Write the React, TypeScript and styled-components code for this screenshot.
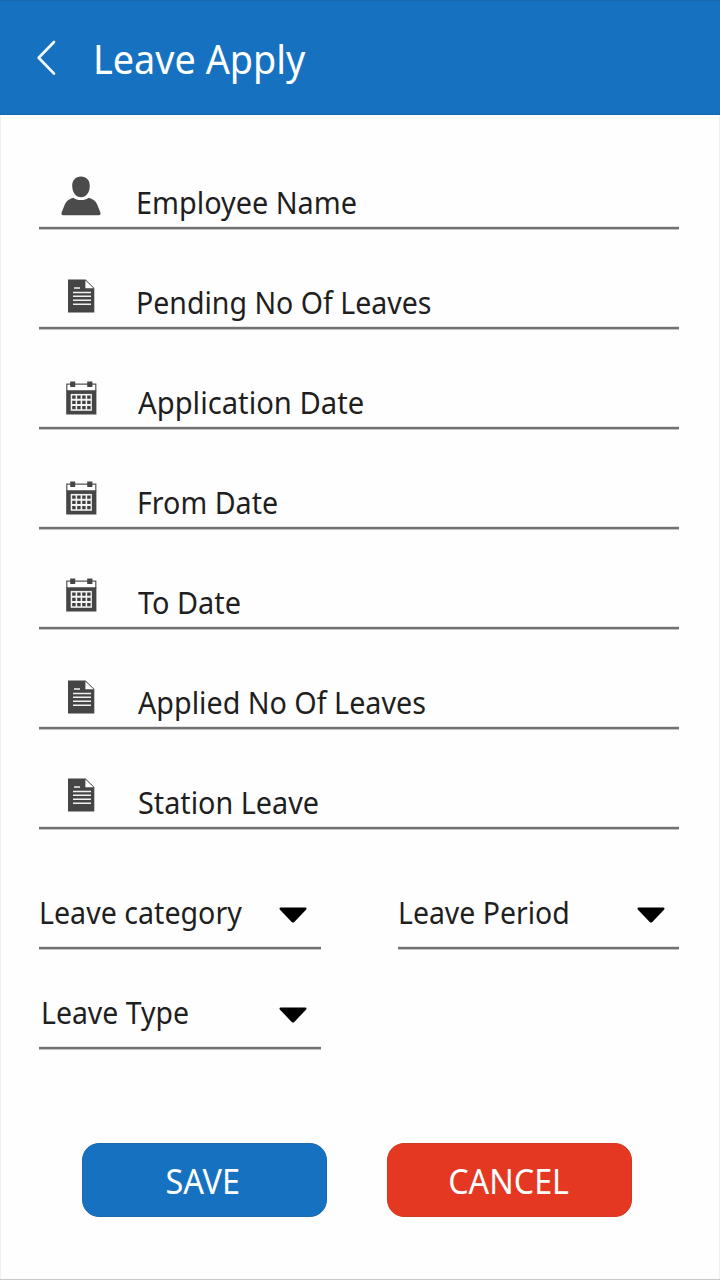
import React from 'react';
import styled, { createGlobalStyle, css } from 'styled-components';

const GlobalStyle = createGlobalStyle`
  *, *::before, *::after { box-sizing: border-box; }
  body {
    margin: 0;
    background: #fefefe;
    font-family: 'Noto Sans', 'Open Sans', sans-serif;
  }
`;

const underline = css`
  border-bottom: 2px solid #717171;
  box-shadow: 0 1px 0 #c4c4c4, inset 0 -1px 0 #e2e2e2;
`;

const Screen = styled.div`
  display: flex;
  flex-direction: column;
  width: 720px;
  height: 1280px;
  background: #fefefe;
  border-bottom: 1px solid #c9c9c9;
  box-shadow: inset 1px 0 0 #f0f0f0, inset -1px 0 0 #f0f0f0;
  overflow: hidden;
`;

const Header = styled.header`
  display: flex;
  align-items: flex-start;
  flex: none;
  height: 114.5px;
  padding-left: 36px;
  background: #1672c1;
  box-shadow: inset 0 1px 0 #1a68ab, inset 0 -1px 0 #1766ad;
`;

const BackButton = styled.button`
  display: flex;
  flex: none;
  width: 57px;
  margin-top: 39px;
  padding: 0;
  border: 0;
  background: none;
`;

const Title = styled.h1<{ $stretch: number }>`
  margin: 32px 0 0;
  font-size: 40px;
  font-weight: 400;
  line-height: 54px;
  color: #fff;
  white-space: nowrap;
  transform: scaleX(${(p) => p.$stretch});
  transform-origin: left;
`;

const Form = styled.form`
  display: flex;
  flex-direction: column;
  flex: 1;
  padding: 14.5px 41px 0 39px;
`;

const Field = styled.label`
  display: flex;
  align-items: flex-start;
  height: 100px;
  ${underline}
`;

const IconSlot = styled.span<{ $top: number }>`
  display: flex;
  justify-content: center;
  flex: none;
  width: 84px;
  padding-top: ${(p) => p.$top}px;
`;

const Label = styled.span<{ $stretch: number; $left?: number; $top?: number }>`
  display: block;
  flex: none;
  margin-top: ${(p) => p.$top ?? 53}px;
  margin-left: ${(p) => p.$left ?? 0}px;
  font-size: 30.6px;
  font-weight: 365;
  line-height: 40px;
  color: #1f1f1f;
  white-space: nowrap;
  transform: scaleX(${(p) => p.$stretch});
  transform-origin: left;
`;

const Selects = styled.div`
  display: grid;
  grid-template-columns: 282px 281px;
  grid-auto-rows: 100px;
  justify-content: space-between;
  margin-top: 20px;
`;

const Select = styled.div`
  display: flex;
  align-items: flex-start;
  justify-content: space-between;
  padding-right: 14px;
  ${underline}
`;

const Caret = styled.svg`
  display: block;
  flex: none;
  margin-top: 58.4px;
`;

const Actions = styled.div`
  display: flex;
  gap: 60px;
  margin: 94.3px 0 0 42.6px;
`;

const Action = styled.button<{ $color: string; $edge: string }>`
  display: flex;
  align-items: center;
  justify-content: center;
  width: 245px;
  height: 74px;
  padding: 2px 2px 0 0;
  border: 1px solid ${(p) => p.$edge};
  border-radius: 17px;
  background: ${(p) => p.$color};
  color: #fff;
  font-family: inherit;
  font-size: 34.5px;
  font-weight: 385;
  line-height: 46px;
`;

const ActionText = styled.span<{ $stretch: number }>`
  display: block;
  transform: scaleX(${(p) => p.$stretch});
`;

const PersonIcon = () => (
  <svg width="40" height="40" viewBox="0 0 40 40" fill="#4b4b4b">
    <path d="M20 0.5C25.5 .5 29 4.3 28.8 10.2C28.6 16.6 25 21.2 20 21.2C15 21.2 11.4 16.6 11.2 10.2C11 4.3 14.5 .5 20 .5Z" />
    <path d="M12.3 21.8C14 23.3 17 24.1 20 24.1C23 24.1 26 23.3 27.7 21.8C31.5 23 34.3 24.4 36 28L39.4 36.6C39.9 38 39.2 39.3 37.8 39.3H2.2C.8 39.3 .1 38 .6 36.6L4 28C5.7 24.4 8.5 23 12.3 21.8Z" />
  </svg>
);

const DocumentIcon = () => (
  <svg width="27" height="34" viewBox="0 0 27 34">
    <path d="M0 .4H17.6L26.3 9V33.4H0Z" fill="#454545" />
    <path d="M17.4 1.5V9.3H25.6Z" fill="#fff" />
    <path d="M6 9H12M5 13.4H23M5 17.3H23M5 21.3H23M5 25.3H23" fill="none" stroke="#f1f1f1" strokeWidth="1.5" />
  </svg>
);

const CalendarIcon = () => (
  <svg width="31" height="34" viewBox="0 0 31 34">
    <path d="M.8 10V3.2H29.8V10" fill="none" stroke="#555" strokeWidth="1.2" />
    <path d="M4.2.6H9.2V6H4.2ZM21.2.6H26.4V6H21.2ZM.2 9.3H30.4V33.4H.2Z" fill="#454545" />
    <path d="M4.7 12.9H25.9V29.8H4.7Z" fill="#f3f3f3" />
    <path
      d="M6.2 14.6H9.6V17.8H6.2ZM11.2 14.6H14.6V17.8H11.2ZM16.2 14.6H19.6V17.8H16.2ZM21.2 14.6H24.6V17.8H21.2ZM6.2 19.8H9.6V23H6.2ZM11.2 19.8H14.6V23H11.2ZM16.2 19.8H19.6V23H16.2ZM21.2 19.8H24.6V23H21.2ZM6.2 25H9.6V28.2H6.2ZM11.2 25H14.6V28.2H11.2ZM16.2 25H19.6V28.2H16.2ZM21.2 25H24.6V28.2H21.2Z"
      fill="#3f3f3f"
    />
  </svg>
);

const CaretIcon = () => (
  <Caret width="28" height="17" viewBox="0 0 28 17">
    <path d="M1.8.6H26.2Q28.4.9 27 2.7L15.3 14.9Q14 16.2 12.7 14.9L1 2.7Q-.4.9 1.8.6Z" fill="#000" />
  </Caret>
);

const fields = [
  { text: 'Employee Name', Icon: PersonIcon, iconTop: 47, left: 13.2, stretch: 0.942 },
  { text: 'Pending No Of Leaves', Icon: DocumentIcon, iconTop: 50, left: 13.2, stretch: 0.932 },
  { text: 'Application Date', Icon: CalendarIcon, iconTop: 52, left: 15.4, stretch: 0.955 },
  { text: 'From Date', Icon: CalendarIcon, iconTop: 52, left: 14, stretch: 0.936 },
  { text: 'To Date', Icon: CalendarIcon, iconTop: 49, left: 15.3, stretch: 0.943 },
  { text: 'Applied No Of Leaves', Icon: DocumentIcon, iconTop: 51, left: 15.4, stretch: 0.938 },
  { text: 'Station Leave', Icon: DocumentIcon, iconTop: 49, left: 14.8, stretch: 0.94 },
];

const selects = [
  { text: 'Leave category', stretch: 0.935, left: 0 },
  { text: 'Leave Period', stretch: 0.929, left: -0.3 },
  { text: 'Leave Type', stretch: 0.929, left: 2 },
];

export default function App() {
  return (
    <Screen>
      <GlobalStyle />
      <Header>
        <BackButton type="button" aria-label="Back">
          <svg width="20" height="37" viewBox="0 0 20 37">
            <path d="M18 3L2.7 18.8L18 34.6" fill="none" stroke="#f4faff" strokeWidth="2.7" strokeLinecap="round" strokeLinejoin="round" />
          </svg>
        </BackButton>
        <Title $stretch={0.9446}>Leave Apply</Title>
      </Header>
      <Form>
        {fields.map(({ text, Icon, iconTop, left, stretch }) => (
          <Field key={text}>
            <IconSlot $top={iconTop}>
              <Icon />
            </IconSlot>
            <Label $stretch={stretch} $left={left}>{text}</Label>
          </Field>
        ))}
        <Selects>
          {selects.map(({ text, stretch, left }) => (
            <Select key={text}>
              <Label $stretch={stretch} $left={left} $top={43}>{text}</Label>
              <CaretIcon />
            </Select>
          ))}
        </Selects>
        <Actions>
          <Action type="button" $color="#1672c1" $edge="#1c69ae">
            <ActionText $stretch={0.94}>SAVE</ActionText>
          </Action>
          <Action type="button" $color="#e53823" $edge="#d13a26">
            <ActionText $stretch={0.936}>CANCEL</ActionText>
          </Action>
        </Actions>
      </Form>
    </Screen>
  );
}
